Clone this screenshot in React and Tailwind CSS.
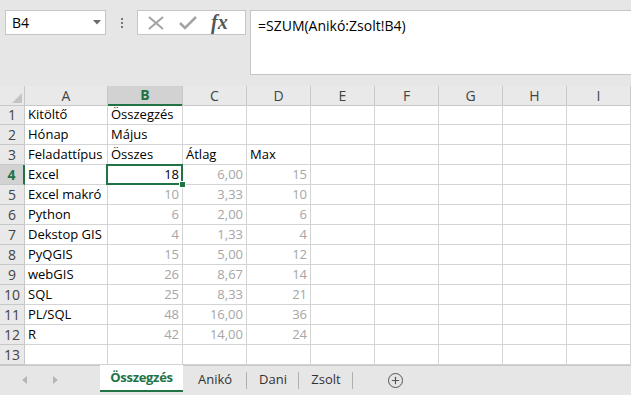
import { Plus } from "lucide-react";

const cols = ["A", "B", "C", "D", "E", "F", "G", "H", "I"];

const rows = [
  ["Kitöltő", "Összegzés", "", ""],
  ["Hónap", "Május", "", ""],
  ["Feladattípus", "Összes", "Átlag", "Max"],
  ["Excel", "18", "6,00", "15"],
  ["Excel makró", "10", "3,33", "10"],
  ["Python", "6", "2,00", "6"],
  ["Dekstop GIS", "4", "1,33", "4"],
  ["PyQGIS", "15", "5,00", "12"],
  ["webGIS", "26", "8,67", "14"],
  ["SQL", "25", "8,33", "21"],
  ["PL/SQL", "48", "16,00", "36"],
  ["R", "42", "14,00", "24"],
  ["", "", "", ""],
];

const grid = "grid grid-cols-[25px_83px_75px_64px_64px_64px_64px_64px_64px_64px]";

function Cell({ r, c, value }) {
  const numeric = r >= 3 && c >= 1 && value !== "";
  const active = r === 3 && c === 1;
  return (
    <div
      className={`h-[20px] border-r border-b border-[#d4d4d4] flex items-center px-[3px] pt-[1px] whitespace-nowrap ${
        numeric ? "justify-end" : ""
      } ${numeric && !active ? "text-[#a6a6a6]" : "text-black"} ${active ? "relative z-10" : ""}`}
    >
      {value}
      {active && (
        <div className="absolute -left-[2px] -top-[1px] -right-[1px] -bottom-[1px] border-2 border-[#217346]">
          <div className="absolute -right-[5px] -bottom-[5px] w-[7px] h-[7px] bg-[#217346] border border-white" />
        </div>
      )}
    </div>
  );
}

export default function App() {
  return (
    <div className="w-[631px] h-[395px] overflow-hidden bg-white text-[13px] font-['Open_Sans',sans-serif]">
      {/* formula area */}
      <div className="h-[86px] bg-[#e6e6e6] flex items-start pt-[10px] pl-[5px]">
        <div className="w-[101px] h-[25px] bg-white border border-[#c6c6c6] flex items-center justify-between pl-[6px] pr-[4px] text-[14px] text-black">
          <span>B4</span>
          <svg width="8" height="5" viewBox="0 0 8 5">
            <path d="M0 0h8L4 4.5z" fill="#6a6a6a" />
          </svg>
        </div>
        <div className="w-[31px] h-[25px] flex flex-col items-center justify-center gap-[2px]">
          <span className="w-[2px] h-[2px] bg-[#777]" />
          <span className="w-[2px] h-[2px] bg-[#777]" />
          <span className="w-[2px] h-[2px] bg-[#777]" />
        </div>
        <div className="w-[109px] h-[25px] bg-white border border-[#c6c6c6] flex items-center pl-[9px] gap-[14px]">
          <svg width="18" height="14" viewBox="0 0 18 14">
            <path d="M2 1l14 12M16 1L2 13" stroke="#a3a3a3" strokeWidth="2" fill="none" />
          </svg>
          <svg width="18" height="14" viewBox="0 0 18 14">
            <path d="M1 7l5 5L17 1" stroke="#a3a3a3" strokeWidth="2.5" fill="none" />
          </svg>
          <span className="font-['Liberation_Serif',serif] italic font-bold text-[20px] leading-none text-[#555] -mt-[2px]">
            fx
          </span>
        </div>
        <div className="ml-[4px] flex-1 h-[65px] bg-white border border-r-0 border-[#c6c6c6] pl-[7px] pt-[4px] text-[14px] text-black">
          =SZUM(Anikó:Zsolt!B4)
        </div>
      </div>

      {/* column headers */}
      <div className={`${grid} h-[19px] bg-[#e9e9e9]`}>
        <div className="relative border-r border-b border-[#c8c8c8]">
          <svg className="absolute right-[2px] bottom-[2px]" width="10" height="10" viewBox="0 0 10 10">
            <path d="M10 0v10H0z" fill="#c4c4c4" />
          </svg>
        </div>
        {cols.map((c) => (
          <div
            key={c}
            className={`flex items-center justify-center text-[14px] leading-[18px] ${
              c === "B"
                ? "bg-[#d2d2d2] text-[#217346] font-bold border-r border-[#c8c8c8] border-b-2 border-b-[#217346]"
                : "text-[#444] border-r border-b border-[#c8c8c8]"
            }`}
          >
            {c}
          </div>
        ))}
      </div>

      {/* rows */}
      {rows.map((row, r) => (
        <div key={r} className={grid}>
          <div
            className={`h-[20px] flex items-center justify-center text-[14px] leading-[18px] pt-[1px] border-b border-[#c8c8c8] ${
              r === 3
                ? "bg-[#d2d2d2] text-[#217346] font-bold border-r-2 border-r-[#217346]"
                : "bg-[#e9e9e9] text-[#444] border-r"
            }`}
          >
            {r + 1}
          </div>
          {cols.map((c, ci) => (
            <Cell key={c} r={r} c={ci} value={row[ci] ?? ""} />
          ))}
        </div>
      ))}

      {/* sheet tabs */}
      <div className="h-[30px] bg-[#e6e6e6] border-t border-[#c8c8c8] flex items-start">
        <div className="w-[100px] h-[28px] flex items-center pl-[22px] gap-[24px]">
          <svg width="6" height="8" viewBox="0 0 6 8">
            <path d="M5 0v8L0 4z" fill="#b5b5b5" />
          </svg>
          <svg width="6" height="8" viewBox="0 0 6 8">
            <path d="M1 0v8l5-4z" fill="#b5b5b5" />
          </svg>
        </div>
        <div className="w-[83px] h-[27px] bg-white border-b-2 border-[#217346] flex items-center justify-center text-[#217346] font-bold text-[13px] tracking-[-0.3px] -mt-[1px]">
          Összegzés
        </div>
        <div className="w-[64px] h-[28px] flex items-center justify-center text-[13px] text-[#333] relative">
          Anikó
          <span className="absolute right-0 top-[6px] h-[17px] w-px bg-[#b0b0b0]" />
        </div>
        <div className="w-[52px] h-[28px] flex items-center justify-center text-[13px] text-[#333] relative">
          Dani
          <span className="absolute right-0 top-[6px] h-[17px] w-px bg-[#b0b0b0]" />
        </div>
        <div className="w-[54px] h-[28px] flex items-center justify-center text-[13px] text-[#333] relative">
          Zsolt
          <span className="absolute right-0 top-[6px] h-[17px] w-px bg-[#b0b0b0]" />
        </div>
        <div className="ml-[35px] h-[28px] flex items-center">
          <div className="w-[15px] h-[15px] rounded-full border border-[#555] flex items-center justify-center">
            <Plus size={11} strokeWidth={2.5} color="#555" />
          </div>
        </div>
      </div>
    </div>
  );
}
